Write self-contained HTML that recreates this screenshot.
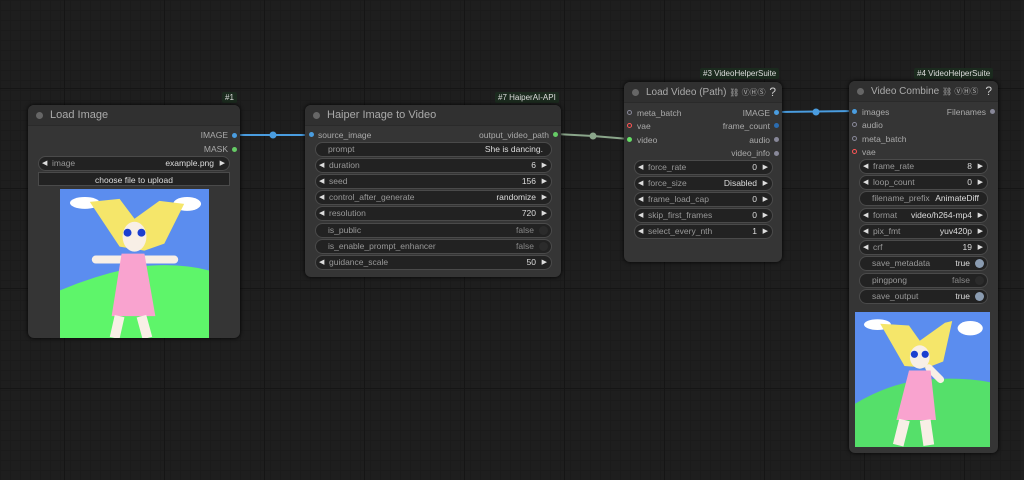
<html><head><style>
body{margin:0;width:1024px;height:480px;overflow:hidden;background:#1e1e1e;font-family:"Liberation Sans",sans-serif;position:relative;
background-image:linear-gradient(#151515 1px,transparent 1px),linear-gradient(90deg,#151515 1px,transparent 1px),linear-gradient(#1b1b1b 1px,transparent 1px),linear-gradient(90deg,#1b1b1b 1px,transparent 1px);background-size:100px 100px,100px 100px,10px 10px,10px 10px;background-position:0 -12px,-36px 0,0 0,0 0}
.n{position:absolute;background:#353535;border-radius:6px;box-shadow:0 0 4px #000}
.t{position:absolute;left:0;right:0;top:0;height:21px;background:#303030;border-radius:6px 6px 0 0;border-bottom:1px solid #2a2a2a;color:#aaa;font-size:11px;line-height:21px;padding-left:22px;box-sizing:border-box;white-space:nowrap}
.t.sm{font-size:10px}
.t:before{content:"";position:absolute;left:8px;top:7px;width:7px;height:7px;border-radius:50%;background:#666}
.b{position:absolute;background:#1b2a1e;color:#ddd;font-size:8px;height:11px;line-height:11px;padding:0 3px;border-radius:2px}
.w{position:absolute;height:13px;border:1px solid #4a4a4a;background:#222;border-radius:8px;font-size:8.5px;line-height:13px;color:#999;box-sizing:content-box}
.w .l{position:absolute;left:12px}.w .v{position:absolute;right:15px;color:#ddd}
.w.a:before{content:"◀";position:absolute;left:3px;color:#ddd;font-size:7px}
.w.a:after{content:"▶";position:absolute;right:4px;color:#ddd;font-size:7px}
.w.a .l{left:13px}
.w.s .v{right:17px}.w.s i{position:absolute;right:3px;top:2px;width:9px;height:9px;border-radius:50%;background:#2b2b2b}
.w.s i.on{background:#8a9bb0}
.o{position:absolute;font-size:8.5px;color:#aaa;line-height:10px;white-space:nowrap}
.d{position:absolute;width:5px;height:5px;border-radius:50%}
</style></head><body>
<svg width="1024" height="480" style="position:absolute;left:0;top:0">
<path d="M234 135 L311 135" stroke="#4a9de0" stroke-width="2" fill="none"/>
<circle cx="273" cy="135" r="3.5" fill="#4a9de0"/>
<path d="M556 134 L593 136 L629 139" stroke="#8aa58a" stroke-width="2" fill="none"/>
<circle cx="593" cy="136" r="3.5" fill="#8aa58a"/>
<path d="M777 112 L855 111" stroke="#4a9de0" stroke-width="2" fill="none"/>
<circle cx="816" cy="112" r="3.5" fill="#4a9de0"/>
</svg>

<div class="b" style="left:222px;top:92px">#1</div>
<div class="n" style="left:28px;top:105px;width:212px;height:233px">
<div class="t">Load Image</div>
<div class="o" style="right:12px;top:25px">IMAGE</div><div class="d" style="right:3px;top:28px;background:#4a9de0"></div>
<div class="o" style="right:12px;top:39px">MASK</div><div class="d" style="right:3px;top:42px;background:#6c6"></div>
<div class="w a" style="left:10px;top:51px;width:190px"><span class="l">image</span><span class="v">example.png</span></div>
<div style="position:absolute;left:10px;top:67px;width:192px;height:14px;background:#222;border:1px solid #4a4a4a;color:#ddd;font-size:8.5px;text-align:center;line-height:14px;box-sizing:border-box">choose file to upload</div>
<svg style="position:absolute;left:32px;top:84px" width="149" height="149" viewBox="0 0 150 150">
<rect width="150" height="150" fill="#5b8def"/>
<path d="M0 102 Q40 85 80 78 Q120 74 150 82 V150 H0Z" fill="#5ef56a"/>
<ellipse cx="25" cy="14" rx="15" ry="6" fill="#fff"/><ellipse cx="128" cy="15" rx="14" ry="7" fill="#fff"/>
<path d="M30 13 L60 10 L75 30 L100 12 L125 15 L105 55 L85 62 L60 58Z" fill="#f5e66a"/>
<ellipse cx="75" cy="48" rx="12" ry="15" fill="#f8efe6"/>
<circle cx="68" cy="44" r="4" fill="#1c3fd0"/><circle cx="82" cy="44" r="4" fill="#1c3fd0"/>
<path d="M36 71 H115" stroke="#f8efe6" stroke-width="8" stroke-linecap="round"/>
<path d="M62 65 H85 L96 128 H52Z" fill="#f9a3cf"/>
<path d="M60 128 L55 150 M82 128 L88 150" stroke="#f8efe6" stroke-width="10"/>
</svg>
</div>

<div class="b" style="left:495px;top:92px">#7 HaiperAI-API</div>
<div class="n" style="left:305px;top:105px;width:256px;height:172px">
<div class="t">Haiper Image to Video</div>
<div class="d" style="left:4px;top:27px;background:#4a9de0"></div><div class="o" style="left:13px;top:25px">source_image</div>
<div class="o" style="right:12px;top:25px">output_video_path</div><div class="d" style="right:3px;top:27px;background:#6c6"></div>
<div class="w" style="left:10px;top:37px;width:235px"><span class="l">prompt</span><span class="v" style="right:8px">She is dancing.</span></div>
<div class="w a" style="left:10px;top:53px;width:235px"><span class="l">duration</span><span class="v">6</span></div>
<div class="w a" style="left:10px;top:69px;width:235px"><span class="l">seed</span><span class="v">156</span></div>
<div class="w a" style="left:10px;top:85px;width:235px"><span class="l">control_after_generate</span><span class="v">randomize</span></div>
<div class="w a" style="left:10px;top:101px;width:235px"><span class="l">resolution</span><span class="v">720</span></div>
<div class="w s" style="left:10px;top:118px;width:235px"><span class="l">is_public</span><span class="v" style="color:#888">false</span><i></i></div>
<div class="w s" style="left:10px;top:134px;width:235px"><span class="l">is_enable_prompt_enhancer</span><span class="v" style="color:#888">false</span><i></i></div>
<div class="w a" style="left:10px;top:150px;width:235px"><span class="l">guidance_scale</span><span class="v">50</span></div>
</div>

<div class="b" style="left:700px;top:68px">#3 VideoHelperSuite</div>
<div class="n" style="left:624px;top:82px;width:158px;height:180px">
<div class="t sm">Load Video (Path) <span style="font-size:8px">⛓ ⓋⒽⓈ</span><span style="position:absolute;right:6px;font-size:12px;color:#ccc">?</span></div>
<div class="d" style="left:3px;top:28px;border:1px solid #889;width:3px;height:3px"></div><div class="o" style="left:13px;top:26px">meta_batch</div>
<div class="d" style="left:3px;top:41px;border:1px solid #f55;width:3px;height:3px"></div><div class="o" style="left:13px;top:39px">vae</div>
<div class="d" style="left:3px;top:55px;background:#6d6"></div><div class="o" style="left:13px;top:53px">video</div>
<div class="o" style="right:12px;top:26px">IMAGE</div><div class="d" style="right:3px;top:28px;background:#4a9de0"></div>
<div class="o" style="right:12px;top:39px">frame_count</div><div class="d" style="right:3px;top:41px;background:#2b6cb0"></div>
<div class="o" style="right:12px;top:53px">audio</div><div class="d" style="right:3px;top:55px;background:#889"></div>
<div class="o" style="right:12px;top:66px">video_info</div><div class="d" style="right:3px;top:69px;background:#889"></div>
<div class="w a" style="left:10px;top:78px;width:137px"><span class="l">force_rate</span><span class="v">0</span></div>
<div class="w a" style="left:10px;top:94px;width:137px"><span class="l">force_size</span><span class="v">Disabled</span></div>
<div class="w a" style="left:10px;top:110px;width:137px"><span class="l">frame_load_cap</span><span class="v">0</span></div>
<div class="w a" style="left:10px;top:126px;width:137px"><span class="l">skip_first_frames</span><span class="v">0</span></div>
<div class="w a" style="left:10px;top:142px;width:137px"><span class="l">select_every_nth</span><span class="v">1</span></div>
</div>

<div class="b" style="left:914px;top:68px">#4 VideoHelperSuite</div>
<div class="n" style="left:849px;top:81px;width:149px;height:372px">
<div class="t sm">Video Combine <span style="font-size:8px">⛓ ⓋⒽⓈ</span><span style="position:absolute;right:6px;font-size:12px;color:#ccc">?</span></div>
<div class="d" style="left:3px;top:28px;background:#4a9de0"></div><div class="o" style="left:13px;top:26px">images</div>
<div class="d" style="left:3px;top:41px;border:1px solid #889;width:3px;height:3px"></div><div class="o" style="left:13px;top:39px">audio</div>
<div class="d" style="left:3px;top:55px;border:1px solid #889;width:3px;height:3px"></div><div class="o" style="left:13px;top:53px">meta_batch</div>
<div class="d" style="left:3px;top:68px;border:1px solid #f55;width:3px;height:3px"></div><div class="o" style="left:13px;top:66px">vae</div>
<div class="o" style="right:12px;top:26px">Filenames</div><div class="d" style="right:3px;top:28px;background:#889"></div>
<div class="w a" style="left:10px;top:78px;width:127px"><span class="l">frame_rate</span><span class="v">8</span></div>
<div class="w a" style="left:10px;top:94px;width:127px"><span class="l">loop_count</span><span class="v">0</span></div>
<div class="w" style="left:10px;top:110px;width:127px"><span class="l">filename_prefix</span><span class="v" style="right:8px">AnimateDiff</span></div>
<div class="w a" style="left:10px;top:127px;width:127px"><span class="l">format</span><span class="v">video/h264-mp4</span></div>
<div class="w a" style="left:10px;top:143px;width:127px"><span class="l">pix_fmt</span><span class="v">yuv420p</span></div>
<div class="w a" style="left:10px;top:159px;width:127px"><span class="l">crf</span><span class="v">19</span></div>
<div class="w s" style="left:10px;top:175px;width:127px"><span class="l">save_metadata</span><span class="v">true</span><i class="on"></i></div>
<div class="w s" style="left:10px;top:192px;width:127px"><span class="l">pingpong</span><span class="v" style="color:#888">false</span><i></i></div>
<div class="w s" style="left:10px;top:208px;width:127px"><span class="l">save_output</span><span class="v">true</span><i class="on"></i></div>
<svg style="position:absolute;left:6px;top:231px" width="135" height="135" viewBox="0 0 150 150">
<rect width="150" height="150" fill="#5b8def"/>
<path d="M0 102 Q40 78 80 75 Q120 72 150 78 V150 H0Z" fill="#55e06a"/>
<ellipse cx="25" cy="14" rx="15" ry="6" fill="#fff"/><ellipse cx="128" cy="18" rx="14" ry="8" fill="#fff"/>
<path d="M28 13 L60 15 L72 32 L100 12 L108 10 L98 55 L80 62 L55 60Z" fill="#f5e66a"/>
<ellipse cx="72" cy="50" rx="11" ry="13" fill="#f8efe6"/>
<circle cx="66" cy="47" r="4" fill="#1c3fd0"/><circle cx="78" cy="47" r="4" fill="#1c3fd0"/>
<path d="M82 62 L95 75" stroke="#f8efe6" stroke-width="8" stroke-linecap="round"/>
<path d="M60 65 H84 L90 120 H46Z" fill="#f9a3cf"/>
<path d="M55 120 L48 148 M78 120 L82 148" stroke="#f8efe6" stroke-width="12"/>
</svg>
</div>
</body></html>
